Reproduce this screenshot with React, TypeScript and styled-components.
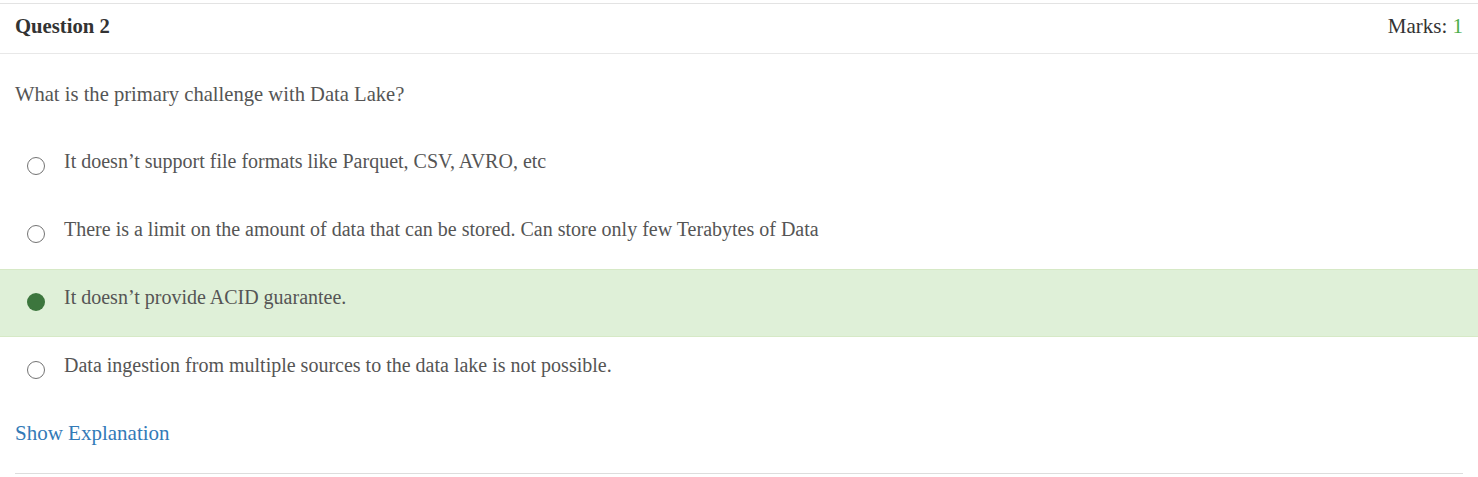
import React from "react";
import styled, { createGlobalStyle } from "styled-components";

const Global = createGlobalStyle`
  html, body { margin: 0; padding: 0; background: #fff; }
  body { font-family: "Liberation Serif", "Times New Roman", serif; }
`;

const Card = styled.div`
  margin-top: 3px;
  border-top: 1px solid #e3e3e3;
`;

const Header = styled.div`
  display: flex;
  justify-content: space-between;
  align-items: center;
  height: 49px;
  padding: 0 15px;
  border-bottom: 1px solid #e8e8e8;
  color: #333;
`;

const Title = styled.div`
  font-weight: bold;
  font-size: 20.7px;
  margin-top: -4px;
`;

const Marks = styled.div`
  color: #333;
  font-size: 21px;
  margin-top: -4px;
`;

const MarkValue = styled.span`
  color: #4cae4c;
`;

const QuestionText = styled.div`
  padding: 28px 15px 27px;
  line-height: 24px;
  font-size: 20.6px;
  color: #555;
`;

const Option = styled.div<{ $selected?: boolean }>`
  display: flex;
  align-items: flex-start;
  gap: 19px;
  box-sizing: border-box;
  height: 68px;
  padding: 15px 0 0 27px;
  background: ${(p) => (p.$selected ? "#dff0d8" : "transparent")};
  border-top: 1px solid ${(p) => (p.$selected ? "#d6e9c6" : "transparent")};
  border-bottom: 1px solid ${(p) => (p.$selected ? "#d6e9c6" : "transparent")};
`;

const Radio = styled.span<{ $checked?: boolean }>`
  flex: none;
  box-sizing: border-box;
  width: 18px;
  height: 18px;
  margin-top: 8px;
  border-radius: 50%;
  border: ${(p) => (p.$checked ? "none" : "1.5px solid #737373")};
  background: ${(p) => (p.$checked ? "#3c763d" : "#fff")};
`;

const OptionLabel = styled.span`
  font-size: 20px;
  line-height: 24px;
  color: #555;
`;

const Footer = styled.div`
  margin: 0 15px;
  padding: 16px 0 26px;
  border-bottom: 1px solid #ddd;
  line-height: 24px;
`;

const ExplainLink = styled.a`
  color: #337ab7;
  font-size: 21px;
  text-decoration: none;
  cursor: pointer;
`;

const options = [
  "It doesn\u2019t support file formats like Parquet, CSV, AVRO, etc",
  "There is a limit on the amount of data that can be stored. Can store only few Terabytes of Data",
  "It doesn\u2019t provide ACID guarantee.",
  "Data ingestion from multiple sources to the data lake is not possible.",
];

export default function App() {
  const selected = 2;
  return (
    <>
      <Global />
      <Card>
        <Header>
          <Title>Question 2</Title>
          <Marks>
            Marks: <MarkValue>1</MarkValue>
          </Marks>
        </Header>
        <QuestionText>What is the primary challenge with Data Lake?</QuestionText>
        {options.map((o, i) => (
          <Option key={i} $selected={i === selected}>
            <Radio $checked={i === selected} />
            <OptionLabel>{o}</OptionLabel>
          </Option>
        ))}
        <Footer>
          <ExplainLink>Show Explanation</ExplainLink>
        </Footer>
      </Card>
    </>
  );
}
